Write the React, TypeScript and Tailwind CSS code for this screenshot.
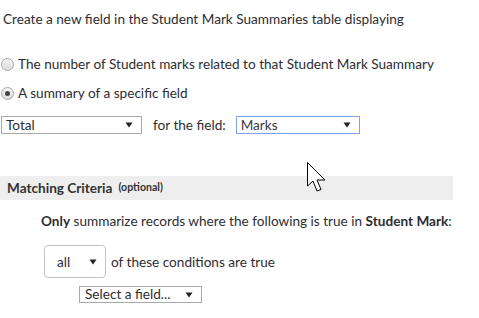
import React from "react";

function Caret() {
  return (
    <svg width="8" height="6" viewBox="0 0 8 6" className="shrink-0">
      <path d="M0.5 0.5 L7.5 0.5 L4 5.5 Z" fill="#222" />
    </svg>
  );
}

function Radio({ checked }: { checked?: boolean }) {
  return (
    <div className="w-[13px] h-[13px] rounded-full border border-[#a8a8a8] bg-gradient-to-b from-[#f4f4f4] to-[#dcdcdc] flex items-center justify-center shrink-0">
      {checked && <div className="w-[5px] h-[5px] rounded-full bg-[#444]" />}
    </div>
  );
}

export default function App() {
  return (
    <div
      className="relative w-[479px] h-[318px] bg-white text-[13.6px] text-[#2d2d33] overflow-hidden"
      style={{ fontFamily: "Lato, 'Open Sans', sans-serif" }}
    >
      <div className="pt-[11px] pl-[3px] leading-[16px]">
        Create a new field in the Student Mark Suammaries table displaying
      </div>

      <div className="mt-[29px] flex items-center gap-[4px] pl-[1px] leading-[16px]">
        <Radio />
        <span>The number of Student marks related to that Student Mark Suammary</span>
      </div>

      <div className="mt-[13px] flex items-center gap-[4px] pl-[1px] leading-[16px]">
        <Radio checked />
        <span>A summary of a specific field</span>
      </div>

      <div className="mt-[15px] flex items-center pl-[1px]">
        <div className="w-[141px] h-[18px] border border-[#a9a9a9] flex items-center justify-between pl-[4px] pr-[8px] leading-[16px]">
          <span>Total</span>
          <Caret />
        </div>
        <span className="ml-[11px] leading-[16px]">for the field:</span>
        <div className="ml-[10px] w-[124px] h-[18px] border border-[#7fa1ee] flex items-center justify-between pl-[4px] pr-[8px] leading-[16px]">
          <span className="text-[#3a3a3a]">Marks</span>
          <Caret />
        </div>
      </div>

      <div className="mt-[42px] w-[453px] h-[24px] bg-[#eeeeee] flex items-center pl-[7px] gap-[6px]">
        <span className="font-bold text-[13.6px] text-[#333]">Matching Criteria</span>
        <span className="font-bold text-[10.6px] text-[#333]">(optional)</span>
      </div>

      <div className="mt-[13px] pl-[41px] leading-[16px]">
        <span className="font-bold">Only</span> summarize records where the following is true in{" "}
        <span className="font-bold">Student Mark</span>:
      </div>

      <div className="mt-[16px] flex items-center pl-[44px]">
        <div className="w-[62px] h-[33px] border border-[#c4c4c4] rounded-[4px] flex items-center justify-between pl-[12px] pr-[8px] leading-[16px]">
          <span>all</span>
          <Caret />
        </div>
        <span className="ml-[5px] leading-[16px]">of these conditions are true</span>
      </div>

      <div className="mt-[8px] pl-[79px]">
        <div className="w-[123px] h-[17px] border border-[#a9a9a9] flex items-center justify-between pl-[5px] pr-[8px] leading-[15px]">
          <span>Select a field...</span>
          <Caret />
        </div>
      </div>

      <svg
        className="absolute left-[306px] top-[161px]"
        width="24"
        height="34"
        viewBox="0 0 24 34"
      >
        <path
          d="M1.5 1.5 L1.5 25 L7 20 L11 30 L15 28.5 L11 19 L19 19 Z"
          fill="#fff"
          stroke="#000"
          strokeWidth="1"
          strokeLinejoin="miter"
        />
      </svg>
    </div>
  );
}
